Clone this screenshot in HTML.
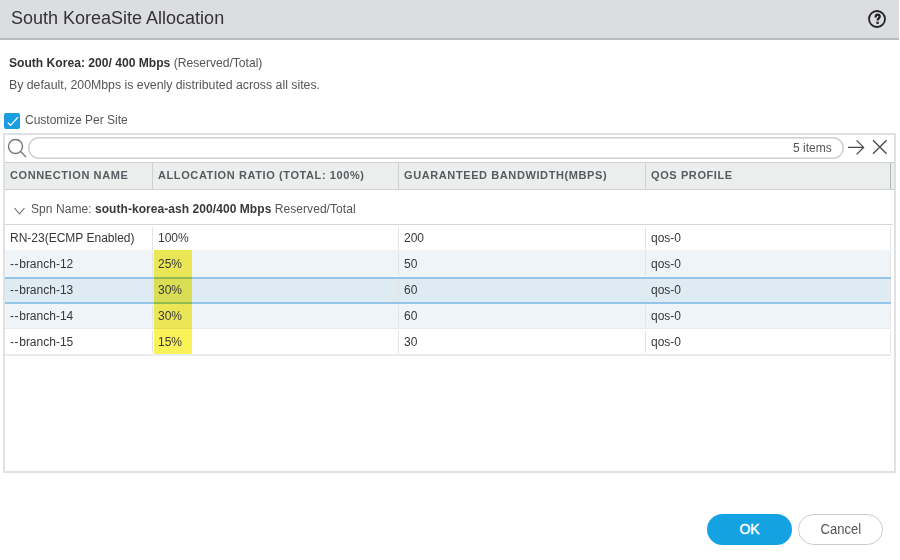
<!DOCTYPE html>
<html><head><meta charset="utf-8">
<style>
*{margin:0;padding:0;box-sizing:border-box;}
html,body{width:900px;height:560px;overflow:hidden;background:#fff;}
body{font-family:"Liberation Sans",sans-serif;color:#333;position:relative;}
.a{position:absolute;white-space:nowrap;}
#hdr{left:0;top:0;width:899px;height:40px;background:#dcdde0;border-bottom:2px solid #b8babd;}
#title{left:11px;top:8px;font-size:18px;color:#333;}
.t12{font-size:12px;}
#l1{left:9px;top:56px;font-size:12.1px;}
#l2{left:9px;top:78px;color:#555;font-size:12.3px;}
#cb{left:4px;top:113px;width:16px;height:16px;background:#1a9ee0;border-radius:2px;}
#cbl{left:25px;top:113px;color:#555;}
#tbl{left:3px;top:133px;width:893px;height:340px;border:2px solid #dfe1e4;}
#items{left:793px;top:140.5px;color:#555;}
#th{left:5px;top:162px;width:889px;height:28px;background:#eceeee;border-top:1px solid #cfd1d4;border-bottom:1px solid #cfd1d4;}
.thc{font-size:11px;font-weight:bold;color:#575b60;letter-spacing:0.6px;top:169px;}
.vd{width:1px;background:#cfd1d4;}
.row{left:5px;width:886px;height:26px;}
.cell{font-size:12px;color:#383838;}
.hl{left:154px;width:38px;background:#fbf158;mix-blend-mode:multiply;}
</style></head><body>
<div id="hdr" class="a"></div>
<div id="title" class="a">South KoreaSite Allocation</div>
<svg class="a" style="left:868px;top:10px" width="18" height="18" viewBox="0 0 18 18"><circle cx="9" cy="9" r="8" fill="none" stroke="#222" stroke-width="1.8"/><path d="M7.6 7.4 C7.6 5.3 8.5 4.6 9.6 4.6 C10.9 4.6 11.7 5.4 11.7 6.6 C11.7 8.3 9.6 8.6 9.6 10.6" fill="none" stroke="#222" stroke-width="2.3"/><rect x="8.4" y="11.7" width="2.4" height="2.2" fill="#222"/></svg>

<div id="l1" class="a t12"><b>South Korea: 200/ 400 Mbps</b> <span style="color:#555">(Reserved/Total)</span></div>
<div id="l2" class="a t12">By default, 200Mbps is evenly distributed across all sites.</div>

<div id="cb" class="a"><svg width="16" height="16" viewBox="0 0 16 16"><path d="M3.8 9.8 L6.6 12.3 L14 4.2" fill="none" stroke="#fff" stroke-width="1.25"/></svg></div>
<div id="cbl" class="a t12">Customize Per Site</div>

<div id="tbl" class="a"></div>
<svg class="a" style="left:6px;top:137px" width="22" height="22" viewBox="0 0 22 22"><circle cx="9.5" cy="9.5" r="7" fill="none" stroke="#72767b" stroke-width="1.4"/><path d="M14.5 14.5 L20 20" stroke="#72767b" stroke-width="1.3"/></svg>
<svg class="a" style="left:28px;top:137px" width="816" height="22" viewBox="0 0 816 22"><rect x="0.75" y="0.75" width="814.5" height="20.5" rx="10.25" fill="none" stroke="#cdd0d3" stroke-width="1.5"/></svg>
<div id="items" class="a t12">5 items</div>
<svg class="a" style="left:846px;top:139px" width="20" height="18" viewBox="0 0 20 18"><path d="M2 8.4 H17.6 M10.6 1.4 L17.6 8.4 L10.6 15.4" fill="none" stroke="#4a4a4a" stroke-width="1.3"/></svg>
<svg class="a" style="left:871px;top:139px" width="18" height="18" viewBox="0 0 18 18"><path d="M2 1.3 L15.6 14.8 M15.6 1.3 L2 14.8" fill="none" stroke="#4a4a4a" stroke-width="1.3"/></svg>

<div id="th" class="a"></div>
<div class="a vd" style="left:152px;top:163px;height:26px"></div>
<div class="a vd" style="left:398px;top:163px;height:26px"></div>
<div class="a vd" style="left:645px;top:163px;height:26px"></div>
<div class="a vd" style="left:890px;top:163px;height:26px;width:1px;background:#b4b8bc"></div>
<div class="a thc" style="left:10px">CONNECTION NAME</div>
<div class="a thc" style="left:158px">ALLOCATION RATIO (TOTAL: 100%)</div>
<div class="a thc" style="left:404px">GUARANTEED BANDWIDTH(MBPS)</div>
<div class="a thc" style="left:651px">QOS PROFILE</div>


<div class="a" style="left:5px;top:190px;width:888px;height:35px;border-bottom:1px solid #d6d8db"></div>
<svg class="a" style="left:13px;top:206px" width="13" height="10" viewBox="0 0 13 10"><path d="M1.5 2 L6.5 8 L11.5 2" fill="none" stroke="#666" stroke-width="1.1"/></svg>
<div class="a cell" style="left:31px;top:202px;color:#555;letter-spacing:0.06px">Spn Name: <b style="color:#3a3a3a">south-korea-ash 200/400 Mbps</b> Reserved/Total</div>

<div class="a row" style="top:225px;height:25px;background:#fff"></div>
<div class="a row" style="top:250px;height:27px;background:#eef4f7"></div>
<div class="a row" style="top:277px;height:27px;background:#deebf3"></div>
<div class="a row" style="top:304px;height:25px;background:#eef4f7;border-bottom:1px solid #e8eaec"></div>
<div class="a row" style="top:329px;height:27px;background:#fff;border-bottom:2px solid #eaeced"></div>
<div class="a vd" style="left:152px;top:227px;height:23px;background:#e2e4e6"></div>
<div class="a vd" style="left:152px;top:252px;height:24px;background:#e2e4e6"></div>
<div class="a vd" style="left:152px;top:279px;height:23px;background:#e2e4e6"></div>
<div class="a vd" style="left:152px;top:305px;height:22px;background:#e2e4e6"></div>
<div class="a vd" style="left:152px;top:331px;height:22px;background:#e2e4e6"></div>
<div class="a vd" style="left:398px;top:227px;height:23px;background:#e2e4e6"></div>
<div class="a vd" style="left:398px;top:252px;height:24px;background:#e2e4e6"></div>
<div class="a vd" style="left:398px;top:279px;height:23px;background:#e2e4e6"></div>
<div class="a vd" style="left:398px;top:305px;height:22px;background:#e2e4e6"></div>
<div class="a vd" style="left:398px;top:331px;height:22px;background:#e2e4e6"></div>
<div class="a vd" style="left:645px;top:227px;height:23px;background:#e2e4e6"></div>
<div class="a vd" style="left:645px;top:252px;height:24px;background:#e2e4e6"></div>
<div class="a vd" style="left:645px;top:279px;height:23px;background:#e2e4e6"></div>
<div class="a vd" style="left:645px;top:305px;height:22px;background:#e2e4e6"></div>
<div class="a vd" style="left:645px;top:331px;height:22px;background:#e2e4e6"></div>
<div class="a vd" style="left:890px;top:227px;height:23px;background:#e2e4e6"></div>
<div class="a vd" style="left:890px;top:252px;height:24px;background:#e2e4e6"></div>
<div class="a vd" style="left:890px;top:279px;height:23px;background:#e2e4e6"></div>
<div class="a vd" style="left:890px;top:305px;height:22px;background:#e2e4e6"></div>
<div class="a vd" style="left:890px;top:331px;height:22px;background:#e2e4e6"></div>
<div class="a" style="left:5px;top:277px;width:886px;height:2px;background:#93c5e6"></div>
<div class="a" style="left:5px;top:302px;width:886px;height:2px;background:#93c5e6"></div>
<div class="a hl" style="top:250px;height:104px"></div>
<div class="a cell" style="left:10px;top:231px">RN-23(ECMP Enabled)</div>
<div class="a cell" style="left:158px;top:231px">100%</div>
<div class="a cell" style="left:404px;top:231px">200</div>
<div class="a cell" style="left:651px;top:231px">qos-0</div>

<div class="a cell" style="left:10px;top:257px"><span style="letter-spacing:0.6px">--</span>branch-12</div>
<div class="a cell" style="left:158px;top:257px">25%</div>
<div class="a cell" style="left:404px;top:257px">50</div>
<div class="a cell" style="left:651px;top:257px">qos-0</div>

<div class="a cell" style="left:10px;top:283px"><span style="letter-spacing:0.6px">--</span>branch-13</div>
<div class="a cell" style="left:158px;top:283px">30%</div>
<div class="a cell" style="left:404px;top:283px">60</div>
<div class="a cell" style="left:651px;top:283px">qos-0</div>

<div class="a cell" style="left:10px;top:309px"><span style="letter-spacing:0.6px">--</span>branch-14</div>
<div class="a cell" style="left:158px;top:309px">30%</div>
<div class="a cell" style="left:404px;top:309px">60</div>
<div class="a cell" style="left:651px;top:309px">qos-0</div>

<div class="a cell" style="left:10px;top:335px"><span style="letter-spacing:0.6px">--</span>branch-15</div>
<div class="a cell" style="left:158px;top:335px">15%</div>
<div class="a cell" style="left:404px;top:335px">30</div>
<div class="a cell" style="left:651px;top:335px">qos-0</div>

<div class="a" style="left:707px;top:514px;width:85px;height:31px;border-radius:16px;background:#14a2e3;color:#fff;font-size:14px;font-weight:normal;-webkit-text-stroke:0.45px #fff;text-align:center;line-height:31px">OK</div>
<div class="a" style="left:798px;top:514px;width:85px;height:31px;border-radius:16px;background:#fff;border:1px solid #c8c9cc;color:#555;font-size:14px;text-align:center;line-height:29px;border-color:#cbcccf"><span style="display:inline-block;transform:scaleX(0.93)">Cancel</span></div>
</body></html>
